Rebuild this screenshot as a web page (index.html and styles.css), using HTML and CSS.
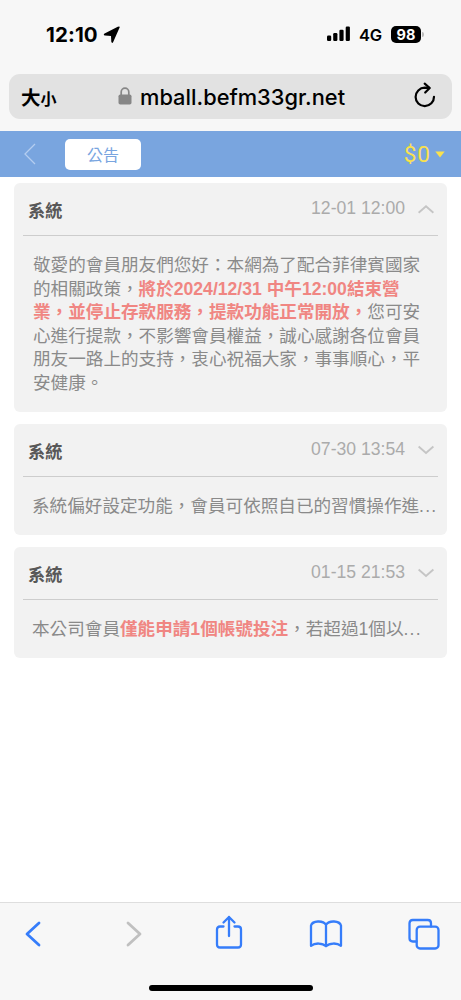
FILE: index.html
```html
<!DOCTYPE html>
<html lang="zh-Hant">
<head>
<meta charset="utf-8">
<meta name="viewport" content="width=device-width">
<title>公告</title>
<link rel="stylesheet" href="styles.css">
</head>
<body>
<div class="screen">
  <header class="status">
    <span class="clock">12:10</span>
    <svg class="location" width="18" height="18" viewBox="0 0 18 18"><path d="M16.600 1.600 10.200 16Q9 18 8.300 15.800L8 10 2 9.600Q-.2 9 1.600 7.600L14.800 .8Q17.200 0 16.600 1.600Z"/></svg>
    <svg class="signal" width="24" height="16" viewBox="0 0 24 16"><rect x="0" y="9.500" width="4.200" height="5.500" rx="1.200"/><rect x="6.200" y="7" width="4.200" height="8" rx="1.200"/><rect x="12.400" y="3.700" width="4.200" height="11.300" rx="1.200"/><rect x="18.700" y="0.500" width="4.200" height="14.500" rx="1.200"/></svg>
    <span class="network">4G</span>
    <span class="battery">98</span>
    <i class="battery-tip"></i>
  </header>

  <div class="address">
    <span class="size"><b class="size-big">大</b><b class="size-small">小</b></span>
    <svg class="lock" width="14" height="18" viewBox="0 0 14 18"><path d="M3.200 8V5a3.800 3.800 0 0 1 7.600 0v3" fill="none" stroke="#868686" stroke-width="1.700"/><rect x=".5" y="7.500" width="13" height="10" rx="1.800" fill="#868686"/></svg>
    <span class="url">mball.befm33gr.net</span>
    <svg class="reload" width="22" height="26" viewBox="0 0 22 26" fill="none" stroke="#000" stroke-width="2.200" stroke-linecap="round" stroke-linejoin="round"><path d="M20 14.800A9.200 9.200 0 1 1 10.800 5.700L15.200 5.900"/><path d="M10.700 1.700 15.700 6 11.200 10.500"/></svg>
  </div>

  <nav class="nav">
    <svg class="nav-back" width="12" height="22" viewBox="0 0 12 22"><path d="M11 1 1 11 11 21" fill="none" stroke="#b4cdf0" stroke-width="1.300"/></svg>
    <span class="nav-tab">公告</span>
    <span class="balance">$0</span>
    <svg class="caret" width="10" height="7" viewBox="0 0 10 7"><path d="M.3.5h9.400L5 6.500z" fill="#fae14d"/></svg>
  </nav>

  <main class="list">
    <article class="card card-open">
      <div class="card-head"><h2 class="card-title">系統</h2><time class="card-time">12-01 12:00</time><svg class="chevron" width="16" height="10" viewBox="0 0 16 10"><path d="M.6 8.700 8 2.200 15.400 8.700"/></svg></div>
      <p class="card-body">敬愛的會員朋友們您好：本網為了配合菲律賓國家<br>的相關政策，<strong>將於2024/12/31 中午12:00結束營<br>業，並停止存款服務，提款功能正常開放，</strong>您可安<br>心進行提款，不影響會員權益，誠心感謝各位會員<br>朋友一路上的支持，衷心祝福大家，事事順心，平<br>安健康。</p>
    </article>
    <article class="card">
      <div class="card-head"><h2 class="card-title">系統</h2><time class="card-time">07-30 13:54</time><svg class="chevron" width="16" height="10" viewBox="0 0 16 10"><path d="M.6 1.500 8 8 15.400 1.500"/></svg></div>
      <p class="card-body">系統偏好設定功能，會員可依照自已的習慣操作進<span class="more">...</span></p>
    </article>
    <article class="card">
      <div class="card-head"><h2 class="card-title">系統</h2><time class="card-time">01-15 21:53</time><svg class="chevron" width="16" height="10" viewBox="0 0 16 10"><path d="M.6 1.500 8 8 15.400 1.500"/></svg></div>
      <p class="card-body">本公司會員<strong>僅能申請1個帳號投注</strong>，若超過1個以<span class="more">...</span></p>
    </article>
  </main>

  <footer class="toolbar">
    <div class="tools">
      <svg width="16" height="26" viewBox="0 0 16 26" stroke-width="2.800"><path d="M14 2 2 13 14 24"/></svg>
      <svg class="disabled" width="16" height="26" viewBox="0 0 16 26" stroke-width="2.800"><path d="M2 2 14 13 2 24"/></svg>
      <svg class="share" width="28" height="34" viewBox="0 0 28 34" stroke-width="2.300"><path d="M8.500 11.500H5Q2 11.500 2 14.500V29.500Q2 32.500 5 32.500H23Q26 32.500 26 29.500V14.500Q26 11.500 23 11.500H19.500"/><path d="M14 21V2M8.500 7.500 14 2 19.500 7.500"/></svg>
      <svg class="book" width="34" height="28" viewBox="0 0 34 28" stroke-width="2.300"><path d="M17 26.200C13.500 22.800 6 22.600 2 25.800V5.500C3.500 .6 14 0 17 4.800C20 0 30.500 .6 32 5.500V25.800C28 22.600 20.500 22.800 17 26.200ZM17 4.800V26"/></svg>
      <svg class="tabs" width="32" height="32" viewBox="0 0 32 32" stroke-width="2.300"><path d="M8.500 23.500H4.800Q1.500 23.500 1.500 20.200V5.300Q1.500 2 4.800 2H19.700Q23 2 23 5.300V8.500"/><rect x="8.700" y="8.700" width="21.800" height="21.800" rx="3.300"/></svg>
    </div>
    <div class="home"></div>
  </footer>
</div>
</body>
</html>
```
FILE: styles.css
```css
* { box-sizing: border-box; }
body {
  margin: 0;
  background: #fff;
  font-family: "Liberation Sans", "Noto Sans CJK TC", sans-serif;
}
.screen {
  display: flex;
  flex-direction: column;
  width: 461px;
  height: 1000px;
  overflow: hidden;
  background: linear-gradient(#f7f7f7 131px, #fff 131px);
}
.status {
  display: flex;
  align-items: center;
  flex: none;
  height: 74px;
  padding: 0 37px 6px 46px;
  color: #000;
  font-family: Inter, sans-serif;
}
.clock { width: 57px; font-size: 20.500px; font-weight: 700; letter-spacing: .1px; }
.location { margin-top: 1px; }
.signal { margin-left: auto; }
.network { width: 24px; margin: 1px 8px 0; font-size: 16.500px; font-weight: 600; letter-spacing: -.2px; }
.battery {
  width: 30px;
  height: 17px;
  border-radius: 5px;
  background: #000;
  color: #fff;
  font-size: 14.500px;
  font-weight: 700;
  line-height: 17px;
  text-align: center;
}
.battery-tip { width: 2px; height: 5px; margin-left: 1px; border-radius: 0 2px 2px 0; background: #bbb; }
.address {
  display: flex;
  align-items: center;
  flex: none;
  height: 45px;
  margin: 0 9px;
  padding: 0 16px 0 12px;
  border-radius: 11px;
  background: #e2e2e2;
}
.size { display: flex; align-items: baseline; width: 97px; font-family: "Noto Sans CJK TC", sans-serif; }
.size b { font-weight: 700; }
.size-big { font-size: 19.500px; }
.size-small { font-size: 16px; }
.lock { margin-bottom: 1px; }
.url { width: 208px; margin-left: 8px; font: 500 21.800px Inter, sans-serif; letter-spacing: .02px; white-space: nowrap; }
.reload { margin: -3px 0 0 auto; }
.nav {
  display: flex;
  align-items: center;
  flex: none;
  height: 46px;
  margin-top: 12px;
  padding: 0 16px 0 24px;
  background: #79a5df;
}
.nav-tab {
  width: 76px;
  height: 31px;
  margin-left: 29px;
  border-radius: 5px;
  background: #fff;
  color: #79a5df;
  font-size: 16px;
  line-height: 34px;
  text-align: center;
}
.balance { margin-left: auto; color: #fae14d; font: 400 22.500px Roboto, sans-serif; letter-spacing: 1px; }
.caret { margin-left: 4px; }
.list {
  display: flex;
  flex-direction: column;
  flex: 1;
  gap: 12px;
  padding: 6px 14px;
}
.card { height: 111px; border-radius: 6px; background: #f2f2f2; }
.card-open { height: 229px; }
.card-head {
  display: flex;
  align-items: center;
  height: 53px;
  margin: 0 9px;
  padding: 0 4px 0 5px;
  border-bottom: 1px solid #cdcdcd;
}
.card-title { flex: 1; margin: 0; color: #585858; font-size: 17.200px; font-weight: 700; }
.card-time { margin-top: -2px; color: #ababab; font-size: 17.600px; }
.chevron { margin: 0 0 1px 13px; fill: none; stroke: #c5c5c5; stroke-width: 1.900; }
.card-body {
  margin: 0;
  padding: 18px 0 0 18px;
  color: #8a8a8a;
  font-size: 17.600px;
  line-height: 23.500px;
  white-space: nowrap;
}
.card-open .card-body { padding: 18px 0 0 19px; }
.card-body strong { color: #f08682; font-weight: 700; }
.more { letter-spacing: 1.200px; }
.toolbar { flex: none; height: 98px; border-top: 1px solid #dedede; background: #f7f7f7; }
.tools { display: flex; align-items: center; height: 61px; padding-left: 25px; }
.tools svg { fill: none; stroke: #367dfa; stroke-linecap: round; stroke-linejoin: round; }
.tools .disabled { margin-left: 85px; stroke: #c0c0c0; }
.tools .share { margin: 0 0 3px 73px; }
.tools .book { margin-left: 66px; }
.tools .tabs { margin-left: 65px; }
.home { width: 164px; height: 6px; margin: 21px auto 0; border-radius: 3px; background: #000; }
```
